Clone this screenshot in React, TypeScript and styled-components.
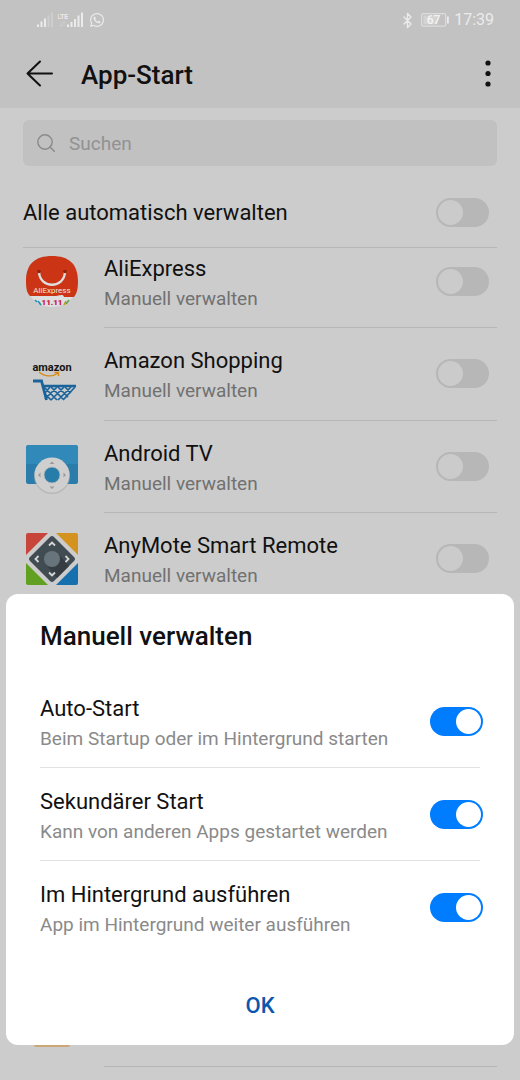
import React, { useState } from "react";
import styled, { createGlobalStyle } from "styled-components";
import { FaWhatsapp } from "react-icons/fa";
import { Bluetooth } from "lucide-react";

const Global = createGlobalStyle`
  * { box-sizing: border-box; }
  body {
    margin: 0;
    background: #cccccc;
    color: #111111;
    font-family: Roboto, "Noto Sans", sans-serif;
  }
  button, input { font: inherit; color: inherit; }
`;

const Page = styled.div`
  min-height: 100vh;
  display: flex;
  flex-direction: column;
  padding-bottom: 13px;
`;

const TopArea = styled.header`
  background: #c2c2c2;
`;

const StatusBar = styled.div`
  height: 40px;
  padding: 0 26px 0 37px;
  display: flex;
  align-items: center;
  justify-content: space-between;
  color: #ebebeb;
`;

const StatusGroup = styled.div`
  display: flex;
  align-items: center;
  gap: 5px;
`;

const Clock = styled.time`
  font-size: 16px;
  line-height: 20px;
`;

const TitleBar = styled.div`
  height: 68px;
  padding: 0 20px 0 25px;
  display: flex;
  align-items: center;
`;

const IconButton = styled.button`
  display: flex;
  padding: 0;
  border: 0;
  background: none;
`;

const PageTitle = styled.h1`
  flex: 1;
  margin: 0 0 0 26px;
  padding-top: 2px;
  font-size: 26px;
  line-height: 32px;
  font-weight: 500;
`;

const SearchBox = styled.label`
  margin: 12px 23px 0;
  height: 46px;
  padding: 0 14px;
  display: flex;
  align-items: center;
  gap: 14px;
  border-radius: 6px;
  background: #c1c1c1;
  color: #8a8a8a;
`;

const SearchInput = styled.input`
  flex: 1;
  min-width: 0;
  padding: 2px 0 0;
  border: 0;
  outline: 0;
  background: none;
  font-size: 19px;
  line-height: 24px;
  &::placeholder { color: #929292; opacity: 1; }
`;

const AllRow = styled.label`
  height: 82px;
  margin: 0 23px;
  padding: 12px 8px 0 0;
  display: flex;
  align-items: center;
  justify-content: space-between;
  border-bottom: 1px solid #b6b6b6;
`;

const ListArea = styled.div`
  flex: 1;
  display: flex;
  overflow: hidden;
`;

const AppList = styled.ul`
  flex: 1;
  margin: -12px 0 0;
  padding: 0 23px 0 26px;
  list-style: none;
  display: grid;
  grid-auto-rows: minmax(92px, 1fr);
`;

const AppItem = styled.li`
  display: flex;
  gap: 26px;
  align-items: center;
`;

const AppIcon = styled.svg`
  width: 52px;
  height: 52px;
  flex: none;
  overflow: visible;
`;

const AppBody = styled.label`
  flex: 1;
  align-self: stretch;
  padding-right: 8px;
  display: flex;
  align-items: center;
  justify-content: space-between;
  border-bottom: 1px solid #b6b6b6;
`;

const Texts = styled.span`
  display: flex;
  flex-direction: column;
  padding-top: 3px;
`;

const Name = styled.span`
  font-size: 22px;
  line-height: 32px;
`;

const Detail = styled.span<{ $tone: string }>`
  font-size: 19px;
  line-height: 28px;
  color: ${(p) => p.$tone};
`;

const Switch = styled.input.attrs({ type: "checkbox", role: "switch" })<{
  $off: string;
  $knob: string;
}>`
  appearance: none;
  flex: none;
  width: 53px;
  height: 29px;
  margin: 0;
  padding: 2px;
  display: flex;
  border-radius: 15px;
  background: ${(p) => p.$off};
  &::before {
    content: "";
    width: 25px;
    height: 25px;
    border-radius: 50%;
    background: ${(p) => p.$knob};
  }
  &:checked {
    justify-content: flex-end;
    background: #007dff;
  }
`;

const Dialog = styled.section`
  position: fixed;
  left: 6px;
  right: 6px;
  bottom: 35px;
  padding: 26px 34px 16px;
  border-radius: 12px;
  background: #ffffff;
`;

const DialogTitle = styled.h2`
  margin: 0 0 23px;
  font-size: 26px;
  line-height: 32px;
  font-weight: 500;
`;

const Option = styled.label`
  height: 93px;
  display: flex;
  align-items: center;
  justify-content: space-between;
  border-bottom: 1px solid #e2e2e2;
  &:last-of-type { border-bottom: 0; }
  ${Switch} { margin-right: -3px; }
`;

const OkButton = styled.button`
  display: block;
  width: 100%;
  height: 48px;
  margin-top: 27px;
  padding: 0;
  border: 0;
  background: none;
  color: #0b57ae;
  font-size: 22px;
  font-weight: 500;
`;

const SignalIcon = () => (
  <svg width="16" height="16" viewBox="0 0 16 16" fill="currentColor">
    <rect x="0" y="12.5" width="2" height="2.5" />
    <rect x="3.500" y="9.5" width="2" height="5.5" />
    <rect x="7" y="6.5" width="2" height="8.5" />
    <rect x="10.500" y="3.5" width="2" height="11.5" opacity="0.3" />
    <rect x="14" y="0.5" width="2" height="14.5" opacity="0.3" />
  </svg>
);

const LteSignalIcon = () => (
  <svg width="26" height="16" viewBox="0 0 26 16" fill="currentColor">
    <text x="-1" y="7" fontSize="7" fontWeight="700">LTE</text>
    <path d="M3 10v4M2 13l1 1.5L4 13M6 14v-4M5 11l1-1.5L7 11" stroke="currentColor" fill="none" strokeWidth="0.7" opacity="0.4" />
    <rect x="9" y="12.5" width="2" height="2.5" />
    <rect x="12.500" y="10" width="2" height="5" />
    <rect x="16" y="7" width="2" height="8" />
    <rect x="19.500" y="3.5" width="2" height="11.5" />
    <rect x="23" y="0.5" width="2" height="14.5" />
  </svg>
);

const BatteryIcon = () => (
  <svg width="28" height="14" viewBox="0 0 28 14">
    <rect x="0.6" y="0.6" width="24" height="12.6" rx="1.5" fill="none" stroke="#dddddd" strokeWidth="1.2" />
    <rect x="2.4" y="2.4" width="14" height="9" fill="#d3d3d3" />
    <rect x="26" y="3.5" width="1.8" height="7" fill="#ebebeb" />
    <text x="12.6" y="11.2" textAnchor="middle" fontSize="12" fontWeight="500" fill="#f4f4f4">67</text>
  </svg>
);

const AliExpressIcon = () => (
  <AppIcon viewBox="0 0 52 52">
    <path d="M3 38C8 46 16 51 26 51S44 46 49 38z" fill="#dedede" />
    <path d="M26 0C43 0 52 8 52 25C52 33 51 37 48 41H38C37 37 33 40 28 40H4C1 37 0 33 0 25C0 8 9 0 26 0z" fill="#cb3515" />
    <path d="M13 16C14 33 38 33 39 16" fill="none" stroke="#dedede" strokeWidth="2.4" strokeLinecap="round" />
    <circle cx="13" cy="15.5" r="1.8" fill="#8f220c" />
    <circle cx="39" cy="15.5" r="1.8" fill="#8f220c" />
    <text x="26" y="37" textAnchor="middle" fontSize="8" fill="#f0e4df">AliExpress</text>
    <text x="26" y="49" textAnchor="middle" fontSize="8" fontWeight="900" fill="#c91346">11.11</text>
    <path d="M12 45l3 4M9 44l2 2" stroke="#238fae" strokeWidth="1.6" />
    <path d="M40 45l-2 4" stroke="#c09422" strokeWidth="1.6" />
    <path d="M43 44l-3 4" stroke="#55a347" strokeWidth="1.4" />
  </AppIcon>
);

const AmazonIcon = () => (
  <AppIcon viewBox="0 0 52 52">
    <text x="26" y="23" textAnchor="middle" fontSize="11" fontWeight="700" fill="#151515">amazon</text>
    <path d="M13 24C19 29 27 29 32 25M28.500 24.500H32.500V28" fill="none" stroke="#d58b18" strokeWidth="1.4" />
    <path d="M7 33H15.500L20.500 52" fill="none" stroke="#1b639b" strokeWidth="2.8" />
    <path d="M17 38H50" stroke="#1b639b" strokeWidth="2.4" />
    <path d="M18 39L31 52M25 39L38 52M32 39L42 49M39 39L45 45M19 46L25 52M24 39L19 45M31 39L19 51M38 39L25 52M45 39L32 52M49 39L38 51" fill="none" stroke="#1b639b" strokeWidth="1.700" />
  </AppIcon>
);

const AndroidTvIcon = () => (
  <AppIcon viewBox="0 0 52 52">
    <rect x="0" y="4" width="52" height="39" rx="2.5" fill="#2a7dab" />
    <path d="M2.500 4H49.500Q52 4 52 6.500V23H0V6.500Q0 4 2.500 4z" fill="#3189b9" />
    <circle cx="26" cy="35" r="18" fill="#aaaaaa" opacity="0.6" />
    <circle cx="26" cy="34" r="17.500" fill="#cfcfcf" />
    <circle cx="26" cy="34" r="8" fill="#287ca9" stroke="#bababa" strokeWidth="0.8" />
    <path d="M23.500 23L26 20.500L28.500 23zM23.500 45.500L26 48L28.500 45.500zM14.500 31.500L12 34L14.500 36.500zM37.500 31.500L40 34L37.500 36.500z" fill="#999999" />
  </AppIcon>
);

const AnyMoteIcon = () => (
  <AppIcon viewBox="0 0 52 52">
    <path d="M2 0H22L0 22V2Q0 0 2 0z" fill="#c7453b" />
    <path d="M30 0H50Q52 0 52 2V22z" fill="#d4921f" />
    <path d="M0 30L22 52H2Q0 52 0 50z" fill="#62a021" />
    <path d="M52 30V50Q52 52 50 52H30z" fill="#1670ad" />
    <path d="M24 4Q26 2 28 4L48 24Q50 26 48 28L28 48Q26 50 24 48L4 28Q2 26 4 24z" fill="#414b52" />
    <path d="M31.700 20.300L43 33L31 45L20.300 31.700z" fill="#353d43" />
    <circle cx="26" cy="26" r="8" fill="#67747b" />
    <path d="M23 12.500L26 9.500L29 12.500M23 39.500L26 42.500L29 39.500M12.500 23L9.500 26L12.500 29M39.500 23L42.500 26L39.500 29" fill="none" stroke="#d6d6d6" strokeWidth="1.8" />
  </AppIcon>
);

const PartlyCoveredIcon = () => (
  <AppIcon viewBox="0 0 52 52">
    <rect x="8" y="30" width="36" height="22" rx="2" fill="#cba778" />
  </AppIcon>
);

const apps = [
  { name: "AliExpress", Icon: AliExpressIcon },
  { name: "Amazon Shopping", Icon: AmazonIcon },
  { name: "Android TV", Icon: AndroidTvIcon },
  { name: "AnyMote Smart Remote", Icon: AnyMoteIcon },
];

const options = [
  { name: "Auto-Start", detail: "Beim Startup oder im Hintergrund starten" },
  { name: "Sekundärer Start", detail: "Kann von anderen Apps gestartet werden" },
  { name: "Im Hintergrund ausführen", detail: "App im Hintergrund weiter ausführen" },
];

const coveredRows = [0, 1, 2, 3];

export default function App() {
  const [query, setQuery] = useState("");
  return (
    <>
      <Global />
      <Page>
        <TopArea>
          <StatusBar>
            <StatusGroup>
              <SignalIcon />
              <LteSignalIcon />
              <FaWhatsapp size={16} />
            </StatusGroup>
            <StatusGroup>
              <Bluetooth size={17} strokeWidth={2} />
              <BatteryIcon />
              <Clock>17:39</Clock>
            </StatusGroup>
          </StatusBar>
          <TitleBar>
            <IconButton aria-label="Zurück">
              <svg width="30" height="30" viewBox="0 0 30 30" fill="none" stroke="#111111" strokeWidth="2" strokeLinecap="round" strokeLinejoin="round">
                <path d="M27 14.500H2.500M15 2.500L2.500 14.500L15 26.500" />
              </svg>
            </IconButton>
            <PageTitle>App-Start</PageTitle>
            <IconButton aria-label="Weitere Optionen">
              <svg width="24" height="30" viewBox="0 0 24 30" fill="#111111">
                <circle cx="12" cy="4" r="2.600" />
                <circle cx="12" cy="14.500" r="2.600" />
                <circle cx="12" cy="25" r="2.600" />
              </svg>
            </IconButton>
          </TitleBar>
        </TopArea>
        <SearchBox>
          <svg width="18" height="18" viewBox="0 0 18 18" fill="none" stroke="currentColor" strokeWidth="1.4" strokeLinecap="round">
            <circle cx="8" cy="8" r="7.200" />
            <path d="M13 13L17.300 17.300" />
          </svg>
          <SearchInput
            type="text"
            aria-label="Suchen"
            placeholder="Suchen"
            value={query}
            onChange={(e) => setQuery(e.target.value)}
          />
        </SearchBox>
        <AllRow>
          <Name>Alle automatisch verwalten</Name>
          <Switch $off="#b7b7b7" $knob="#cbcbcb" />
        </AllRow>
        <ListArea>
          <AppList>
            {apps.map(({ name, Icon }) => (
              <AppItem key={name}>
                <Icon />
                <AppBody>
                  <Texts>
                    <Name>{name}</Name>
                    <Detail $tone="#717171">Manuell verwalten</Detail>
                  </Texts>
                  <Switch $off="#b7b7b7" $knob="#cbcbcb" />
                </AppBody>
              </AppItem>
            ))}
            {coveredRows.map((row) => (
              <AppItem key={row} />
            ))}
            <AppItem>
              <PartlyCoveredIcon />
              <AppBody as="div" />
            </AppItem>
          </AppList>
        </ListArea>
      </Page>
      <Dialog role="dialog" aria-labelledby="dialog-title">
        <DialogTitle id="dialog-title">Manuell verwalten</DialogTitle>
        {options.map(({ name, detail }) => (
          <Option key={name}>
            <Texts>
              <Name>{name}</Name>
              <Detail $tone="#8a8a8a">{detail}</Detail>
            </Texts>
            <Switch defaultChecked $off="#e0e0e0" $knob="#ffffff" />
          </Option>
        ))}
        <OkButton type="button">OK</OkButton>
      </Dialog>
    </>
  );
}
